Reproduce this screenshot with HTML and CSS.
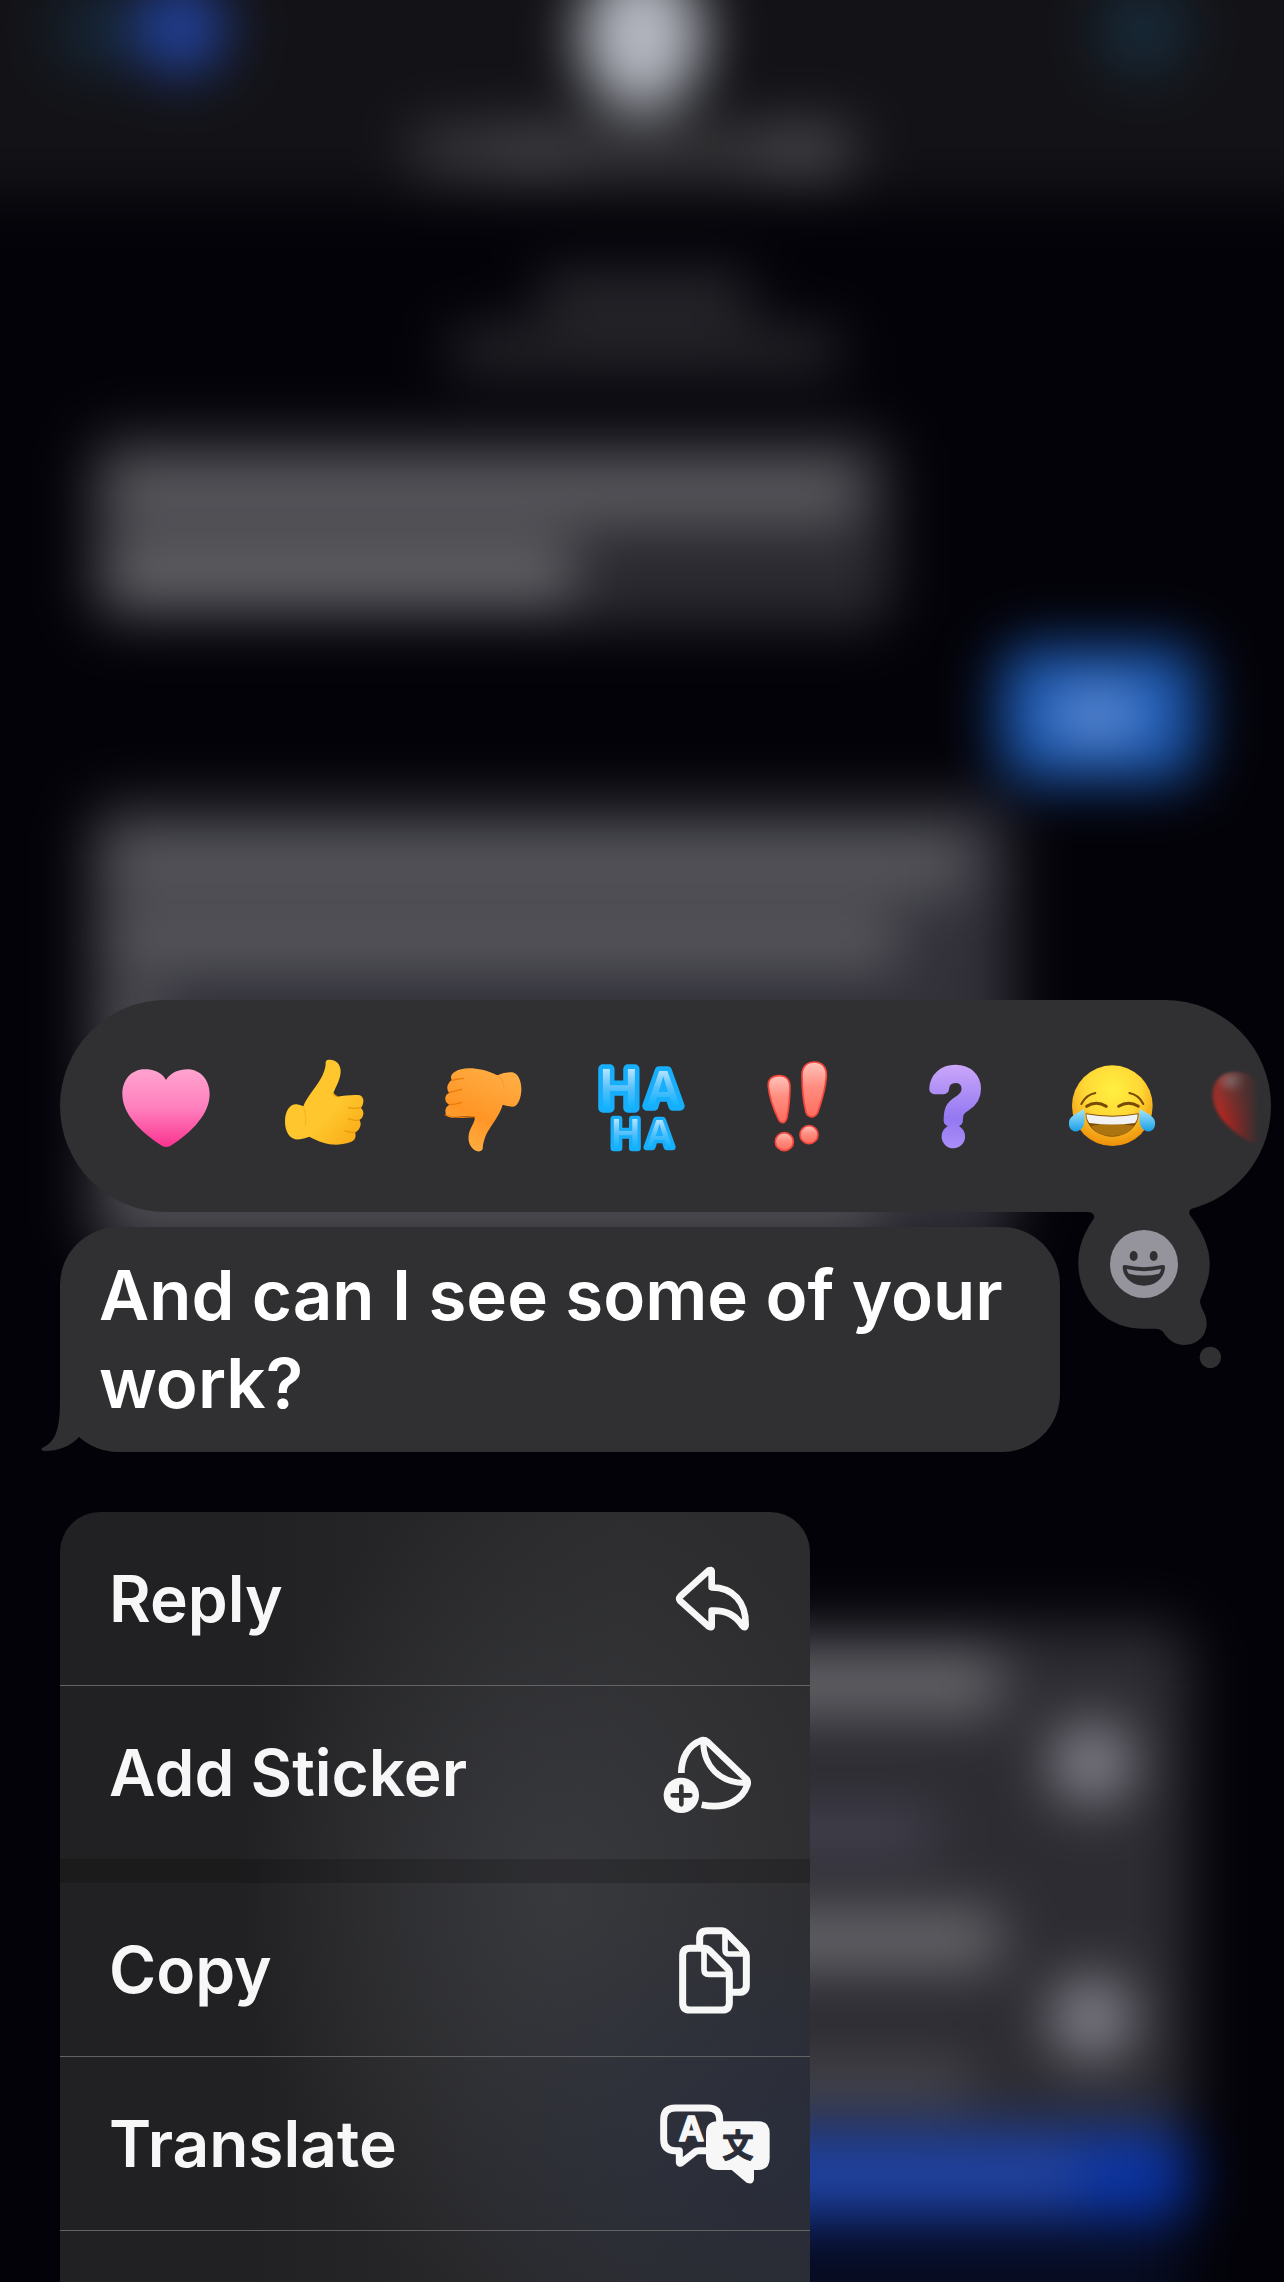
FILE: index.html
```html
<!DOCTYPE html>
<html lang="en">
<head>
    <meta charset="UTF-8">
    <meta name="viewport" content="width=device-width, initial-scale=1.0">
    <title>Messages</title>
    <link rel="stylesheet" href="styles.css">
</head>
<body>
    <!-- Blurred conversation behind the menu -->
    <svg class="backdrop" viewBox="0 0 1284 2282" preserveAspectRatio="xMidYMin slice" aria-hidden="true">
        <defs>
            <filter id="soft" x="-200" y="-200" width="1700" height="2700" filterUnits="userSpaceOnUse" color-interpolation-filters="sRGB">
                <feGaussianBlur stdDeviation="28"/>
            </filter>
        </defs>
        <g filter="url(#soft)">
            <!-- Header -->
            <rect x="-200" y="-200" width="1700" height="2700" fill="#030208"/>
            <rect x="-200" y="-200" width="1700" height="396" fill="#131317"/>
            <circle cx="95" cy="30" r="38" fill="#16283a"/>
            <circle cx="180" cy="28" r="46" fill="#2243a0"/>
            <circle cx="1143" cy="30" r="44" fill="#182c3c"/>
            <rect x="410" y="126" width="450" height="50" rx="20" fill="#3a3a3d"/>
            <rect x="490" y="126" width="90" height="50" fill="#45454a"/>
            <rect x="760" y="126" width="80" height="50" fill="#4a4a4f"/>
            <ellipse cx="642" cy="36" rx="62" ry="76" fill="#b4b7c0"/>
            <!-- Time stamp -->
            <rect x="540" y="275" width="210" height="40" fill="#2f2f34"/>
            <rect x="450" y="330" width="390" height="42" fill="#2a2a2f"/>
            <!-- First message -->
            <rect x="88" y="432" width="805" height="194" rx="30" fill="#2b2a30"/>
            <rect x="108" y="466" width="750" height="54" fill="#606065"/>
            <rect x="108" y="544" width="465" height="56" fill="#68686d"/>
            <!-- Sent message -->
            <rect x="1000" y="646" width="200" height="136" rx="30" fill="#1a57b0"/>
            <rect x="1050" y="690" width="95" height="50" rx="20" fill="#6590d6"/>
            <!-- Second message -->
            <rect x="88" y="802" width="925" height="450" rx="30" fill="#32313a"/>
            <rect x="108" y="838" width="860" height="52" fill="#5d5d62"/>
            <rect x="108" y="915" width="790" height="52" fill="#5d5d62"/>
            <rect x="108" y="995" width="50" height="50" fill="#5d5d62"/>
            <rect x="108" y="1150" width="770" height="100" fill="#4c4c51"/>
            <!-- Attachments -->
            <rect x="420" y="1625" width="770" height="505" rx="30" fill="#2d2c32"/>
            <rect x="500" y="1655" width="500" height="58" fill="#69696e"/>
            <rect x="500" y="1810" width="435" height="44" fill="#454453"/>
            <circle cx="1092" cy="1763" r="42" fill="#85848e"/>
            <rect x="500" y="1910" width="500" height="58" fill="#69696e"/>
            <circle cx="1092" cy="2018" r="42" fill="#85848e"/>
            <rect x="500" y="2065" width="470" height="36" fill="#4f4e55"/>
            <rect x="500" y="2130" width="690" height="92" rx="20" fill="#0b34a4"/>
            <rect x="600" y="2150" width="480" height="54" fill="#26469f"/>
            <rect x="700" y="2240" width="484" height="140" fill="#070c22"/>
        </g>
    </svg>

    <main class="overlay">
        <!-- Quick reactions -->
        <section class="reactions" aria-label="Reactions">
            <div class="reaction-list">
                <button class="reaction" aria-label="Heart">
                    <svg viewBox="235 234 288 288">
                        <defs>
                            <linearGradient id="pink" x1="0" y1="0" x2="0" y2="1">
                                <stop offset="0" stop-color="#ffa3cf"/>
                                <stop offset=".5" stop-color="#ff7fbd"/>
                                <stop offset="1" stop-color="#fa3390"/>
                            </linearGradient>
                        </defs>
                        <path fill="url(#pink)" d="M379 300C365 275 340 268 315 268C275 268 248 300 248 342C248 400 300 455 368 498Q380 504 392 498C460 455 510 400 510 342C510 300 482 268 443 268C418 268 393 278 379 300Z"/>
                    </svg>
                </button>
                <button class="reaction" aria-label="Thumbs up">
                    <svg viewBox="708 234 288 288">
                        <defs>
                            <linearGradient id="yellow" x1="0" y1="0" x2="1" y2="1">
                                <stop offset="0" stop-color="#ffc52c"/>
                                <stop offset=".6" stop-color="#ffc62d"/>
                                <stop offset="1" stop-color="#f8a712"/>
                            </linearGradient>
                        </defs>
                        <path fill="url(#yellow)" d="M862 240C880 235 903 248 902 275C901 300 888 318 880 340Q884 348 892 350C915 346 945 343 960 346Q972 352 970 366Q968 380 962 383Q972 392 970 403Q968 415 958 420Q965 430 960 441Q956 453 945 457Q950 470 942 480Q935 487 920 490C880 500 845 490 808 470Q795 475 780 478C750 482 735 455 735 425C735 395 748 372 770 373Q780 374 790 379C800 350 835 315 848 285Q858 262 857 246Q858 241 862 240Z"/>
                        <g fill="none" stroke="#ec9a0c" stroke-width="4" stroke-linecap="round">
                            <path d="M925 383Q945 387 962 383"/>
                            <path d="M925 416Q942 423 958 420"/>
                            <path d="M915 452Q930 459 945 457"/>
                            <path d="M790 380Q800 405 796 435" stroke="#f9b524"/>
                            <path d="M880 340Q884 348 892 350"/>
                        </g>
                    </svg>
                </button>
                <button class="reaction" aria-label="Thumbs down">
                    <svg viewBox="42 234 288 288">
                        <defs>
                            <linearGradient id="orange" x1=".2" y1="1" x2=".6" y2="0">
                                <stop offset="0" stop-color="#ffb044"/>
                                <stop offset=".45" stop-color="#ff9626"/>
                                <stop offset="1" stop-color="#ffac42"/>
                            </linearGradient>
                        </defs>
                        <path fill="url(#orange)" d="M95 300Q88 285 105 275C125 262 175 258 232 286Q255 275 278 277C298 282 305 310 304 332C302 362 290 382 275 380Q260 378 248 374C240 405 210 440 198 465Q188 490 188 508Q184 516 172 514C150 505 142 485 147 460C152 440 166 425 164 412Q150 405 95 413Q76 412 76 393Q77 380 88 374Q74 368 76 352Q78 342 88 338Q79 330 83 316Q87 305 95 300Z"/>
                        <g fill="none" stroke="#ec7a08" stroke-width="4" stroke-linecap="round">
                            <path d="M95 301Q115 296 130 295"/>
                            <path d="M88 338Q105 332 125 328"/>
                            <path d="M88 374Q105 374 125 367"/>
                            <path d="M76 405Q100 415 164 410"/>
                            <path d="M232 287Q252 300 252 325" stroke="#fb9c38"/>
                        </g>
                    </svg>
                </button>
                <button class="reaction" aria-label="Ha ha">
                    <svg viewBox="516 234 288 288">
                        <defs>
                            <linearGradient id="aqua" x1="0" y1="0" x2="0" y2="1">
                                <stop offset=".2" stop-color="#b4e3ff"/>
                                <stop offset=".5" stop-color="#55c0fb"/>
                                <stop offset=".8" stop-color="#0eb4ff"/>
                            </linearGradient>
                        </defs>
                        <g class="haha">
                            <text x="597" y="385" font-size="160" stroke-width="28">H</text>
                            <text x="730" y="377" font-size="146" stroke-width="28">A</text>
                            <text x="617" y="504" font-size="118" stroke-width="20">H</text>
                            <text x="719" y="502" font-size="112" stroke-width="20">A</text>
                        </g>
                    </svg>
                </button>
                <button class="reaction" aria-label="Emphasize">
                    <svg viewBox="990 234 288 288">
                        <defs>
                            <linearGradient id="coral" x1="0" y1="0" x2="0" y2="1">
                                <stop offset="0" stop-color="#ffc4bb"/>
                                <stop offset=".45" stop-color="#ff8d80"/>
                                <stop offset="1" stop-color="#ff6d5e"/>
                            </linearGradient>
                        </defs>
                        <g fill="url(#coral)" stroke="#f4453c" stroke-width="5">
                            <path d="M1045 320C1043 298 1056 287 1078 287C1100 287 1111 301 1110 325C1109 360 1104 398 1101 413Q1096 428 1088 428Q1079 427 1075 417C1062 390 1048 350 1045 320Z"/>
                            <path d="M1146 285C1146 260 1161 246 1183 246C1206 246 1221 262 1219 290C1216 330 1203 370 1193 398Q1186 411 1174 411Q1162 409 1158 397C1151 370 1146 320 1146 285Z"/>
                            <circle cx="1093" cy="485" r="27"/>
                            <circle cx="1167" cy="464" r="27"/>
                        </g>
                    </svg>
                </button>
                <button class="reaction" aria-label="Question">
                    <svg viewBox="204 234 288 288">
                        <defs>
                            <linearGradient id="violet" x1="0" y1="0" x2="0" y2="1">
                                <stop offset=".15" stop-color="#c9a6f9"/>
                                <stop offset=".6" stop-color="#9478f2"/>
                                <stop offset=".85" stop-color="#a98df8"/>
                            </linearGradient>
                        </defs>
                        <text class="question" x="347" y="486" font-size="292">?</text>
                    </svg>
                </button>
                <button class="reaction" aria-label="Tears of joy">
                    <svg viewBox="678 234 288 288">
                        <defs>
                            <radialGradient id="face" cx=".5" cy=".3" r=".7">
                                <stop offset="0" stop-color="#fff03f"/>
                                <stop offset=".5" stop-color="#ffd836"/>
                                <stop offset="1" stop-color="#ee8f09"/>
                            </radialGradient>
                            <linearGradient id="tear" x1="0" y1="0" x2="0" y2="1">
                                <stop offset="0" stop-color="#a4e6fb"/>
                                <stop offset="1" stop-color="#1a9fe8"/>
                            </linearGradient>
                        </defs>
                        <circle cx="817" cy="377" r="121" fill="url(#face)"/>
                        <g fill="none" stroke="#7a4a05" stroke-linecap="round">
                            <path d="M724 372Q738 344 766 339M910 372Q896 344 868 339" stroke-width="6"/>
                            <path d="M740 379Q768 361 799 379M836 379Q866 361 895 379" stroke-width="9"/>
                        </g>
                        <path fill="#7d4c05" d="M737 400Q817 414 896 400C896 440 860 470 817 470C773 470 737 440 737 400Z"/>
                        <path fill="#ac7410" d="M752 438Q817 425 882 438C866 460 845 468 817 468C789 468 768 460 752 438Z"/>
                        <path fill="#f1f2f4" d="M739 403Q817 417 893 403Q893 420 885 429Q817 438 748 429Q740 420 739 403Z"/>
                        <path fill="url(#tear)" d="M732 387Q738 420 729 440Q718 456 702 454Q684 446 687 425C690 407 712 400 732 387Z"/>
                        <path fill="url(#tear)" d="M900 387Q894 420 903 440Q914 456 930 454Q948 446 945 425C942 407 920 400 900 387Z"/>
                    </svg>
                </button>
                <button class="reaction" aria-label="Red heart">
                    <svg viewBox="1152 234 288 288">
                        <defs>
                            <radialGradient id="red" cx=".23" cy=".12" r=".6">
                                <stop offset="0" stop-color="#987472"/>
                                <stop offset=".3" stop-color="#8c322d"/>
                                <stop offset="1" stop-color="#b8241e"/>
                            </radialGradient>
                        </defs>
                        <path class="next-heart" fill="url(#red)" d="M1247 306C1233 280 1208 276 1183 276C1143 276 1118 305 1118 345C1118 400 1166 450 1234 488Q1246 494 1258 488C1326 450 1376 400 1376 345C1376 305 1348 276 1309 276C1284 276 1259 283 1247 306Z"/>
                    </svg>
                </button>
            </div>

            <!-- Thought bubble that opens the emoji keyboard -->
            <button class="picker" aria-label="More emoji">
                <svg viewBox="702 660 456 525">
                    <g fill="#303032">
                        <path d="M740 660V696Q763 696 763 712C755 730 715 775 715 850C715 960 800 1046 905 1046H945Q962 1046 970 1057C985 1080 1005 1095 1032 1095C1075 1095 1100 1065 1100 1030C1100 1000 1080 985 1080 962C1090 930 1109 905 1109 850C1109 790 1075 740 1050 706Q1043 694 1056 684L1075 676V660Z"/>
                        <circle cx="1111" cy="1132" r="32"/>
                    </g>
                    <circle cx="912" cy="852" r="102" fill="#95949d"/>
                    <ellipse cx="881" cy="828" rx="12" ry="15" fill="#303032"/>
                    <ellipse cx="941" cy="828" rx="12" ry="15" fill="#303032"/>
                    <path fill="#303032" d="M848 860Q848 854 856 855Q912 868 967 855Q975 854 975 860C975 890 950 917 912 917C874 917 848 890 848 860Z"/>
                    <path fill="#95949d" d="M860 867Q912 880 963 867Q962 876 957 881Q912 892 867 881Q862 876 860 867Z"/>
                </svg>
            </button>
        </section>

        <!-- Selected message -->
        <div class="message">
            And can I see some of your work?
            <svg class="message-tail" viewBox="40 1380 60 73" aria-hidden="true">
                <path d="M60 1385V1400C60 1430 56 1443 42 1449Q40 1451 44 1452Q66 1452 79 1438L100 1420V1385Z"/>
            </svg>
        </div>

        <!-- Actions for the message -->
        <div class="menu">
            <button class="menu-item">
                <span>Reply</span>
                <svg viewBox="102 55 360 300" aria-hidden="true">
                    <path class="line" stroke-width="20" d="M275 121Q274 116 267 119L181 197Q175 204 181 211L267 288Q274 292 275 287V240C322 238 348 255 366 284Q376 296 377 282C378 215 340 170 275 170Z"/>
                </svg>
            </button>
            <button class="menu-item">
                <span>Add Sticker</span>
                <svg viewBox="102 576 360 300" aria-hidden="true">
                    <path class="line" stroke-width="20" d="M184 726C184 680 205 642 245 628Q255 626 262 632L377 742Q386 750 382 762C368 802 325 838 245 821"/>
                    <path class="line" stroke-width="18" d="M250 634C250 705 300 756 376 756"/>
                    <circle cx="184" cy="793" r="53" fill="#f7f7f8"/>
                    <path class="plus" d="M158 793H211M184 767V820"/>
                </svg>
            </button>
            <div class="menu-gap"></div>
            <button class="menu-item">
                <span>Copy</span>
                <svg viewBox="102 87 360 300" aria-hidden="true">
                    <path class="line" stroke-width="21" d="M239 166V142Q239 119 262 119H306Q313 119 319 125L373 180Q379 187 379 194V282Q379 304 357 304H336"/>
                    <path class="line" stroke-width="17" d="M315 126V176Q315 189 328 189H372"/>
                    <path class="line" stroke-width="21" d="M210 172H255Q262 172 268 178L322 232Q328 238 328 245V335Q328 357 306 357H210Q188 357 188 335V194Q188 172 210 172Z"/>
                    <path class="line" stroke-width="17" d="M252 178V236Q252 250 266 250H322"/>
                </svg>
            </button>
            <button class="menu-item">
                <span>Translate</span>
                <svg viewBox="102 610 360 300" aria-hidden="true">
                    <path class="line" stroke-width="21" d="M299 700V687Q299 652 264 652H166Q131 652 131 687V745Q131 780 166 780H178V815Q179 820 184 816L226 783Q230 780 236 780H262"/>
                    <text class="latin" x="214" y="752" font-size="104">A</text>
                    <path fill="#f7f7f8" d="M293 692H414Q449 692 449 727V803Q449 838 414 838H402V866Q400 884 380 876L335 838H293Q258 838 258 803V727Q258 692 293 692Z"/>
                    <text class="han" x="354" y="798" font-size="94">文</text>
                </svg>
            </button>
            <div class="menu-item"></div>
        </div>
    </main>
</body>
</html>
```

FILE: styles.css
```css
* {
    box-sizing: border-box;
}

body {
    position: relative;
    height: 100vh;
    margin: 0;
    overflow: hidden;
    background-color: #030208;
    color: #fff;
    font-family: Inter, "Liberation Sans", sans-serif;
}

button {
    padding: 0;
    border: none;
    background: none;
    color: inherit;
    font: inherit;
    cursor: pointer;
}

svg {
    display: block;
}

/* Blurred conversation */
.backdrop {
    position: absolute;
    inset: 0;
    width: 100%;
    height: 100%;
}

/* Everything that stays sharp above the blur */
.overlay {
    position: relative;
    display: flex;
    flex-direction: column;
    align-items: flex-start;
    height: 100vh;
    padding: 1000px 13px 0 60px;
}

/* Reaction bar */
.reactions {
    position: relative;
    flex: none;
    align-self: stretch;
    height: 212px;
    margin-bottom: 15px;
    border-radius: 106px;
    background-color: #303032;
}

.reaction-list {
    display: flex;
    align-items: center;
    height: 100%;
    padding-left: 27px;
    overflow: hidden;
    border-radius: 106px;
    mask-image: linear-gradient(to left, transparent 12px, #000 50px);
}

.reaction {
    display: flex;
    flex: none;
    justify-content: center;
    width: 158px;
}

.reaction svg {
    width: 96px;
    height: 96px;
    overflow: visible;
}

.haha text {
    fill: url(#aqua);
    stroke: #17aefc;
    stroke-linejoin: round;
    paint-order: stroke;
    font-weight: 600;
    text-anchor: middle;
}

.question {
    fill: url(#violet);
    stroke: url(#violet);
    stroke-width: 32px;
    stroke-linejoin: round;
    font-weight: 400;
    text-anchor: middle;
}

.next-heart {
    filter: blur(5px);
}

/* Thought bubble under the bar */
.picker {
    position: absolute;
    top: 200px;
    right: 45px;
}

.picker svg {
    width: 152px;
    height: 175px;
}

/* Selected message */
.message {
    position: relative;
    flex: none;
    max-width: 1000px;
    margin-bottom: 60px;
    padding: 24px 39px 25px;
    border-radius: 58px;
    background-color: #303032;
    font-size: 69px;
    font-weight: 600;
    line-height: 88px;
}

.message-tail {
    position: absolute;
    bottom: 0;
    left: -20px;
    width: 60px;
    height: 73px;
    fill: #303032;
}

/* Context menu */
.menu {
    display: flex;
    flex: 1;
    flex-direction: column;
    width: 750px;
    max-width: 100%;
    min-height: 0;
    overflow: hidden;
    border-radius: 40px 40px 0 0;
    background-color: #232324;
    background-image:
        radial-gradient(ellipse 400px 280px at 100% 640px, rgba(38, 46, 72, 0.5), transparent),
        radial-gradient(ellipse 320px 430px at 500px 380px, #38393d, transparent),
        linear-gradient(to right, #212123 25%, #2c2c2e 75%);
    color: #f7f7f8;
    font-size: 64px;
    font-weight: 600;
}

.menu-item {
    display: flex;
    flex: none;
    align-items: center;
    justify-content: space-between;
    width: 100%;
    height: 173px;
    padding: 0 36px 0 49px;
    text-align: left;
}

.menu-item + .menu-item {
    height: 174px;
    border-top: 1px solid #636366;
}

/* The last row runs down to the edge of the screen */
.menu-item:last-child {
    flex: 1 1 0;
    min-height: 0;
}

.menu-gap {
    flex: none;
    height: 24px;
    background-color: rgba(0, 0, 0, 0.18);
}

/* Menu icons */
.menu-item svg {
    width: 120px;
    height: 100px;
}

.line {
    fill: none;
    stroke: #f7f7f8;
    stroke-linejoin: round;
}

.plus {
    fill: none;
    stroke: #333336;
    stroke-width: 14px;
    stroke-linecap: round;
}

.latin {
    fill: #f7f7f8;
    stroke: #f7f7f8;
    stroke-width: 5px;
    stroke-linejoin: round;
    font-weight: 600;
    text-anchor: middle;
}

.han {
    fill: #2b2e38;
    stroke: #2b2e38;
    stroke-width: 3px;
    stroke-linejoin: round;
    font-family: "Noto Sans CJK JP", sans-serif;
    font-weight: 700;
    text-anchor: middle;
}
```
